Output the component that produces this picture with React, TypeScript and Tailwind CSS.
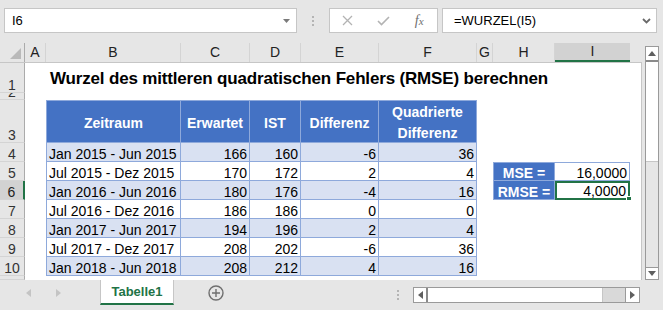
import type { ReactNode } from 'react';

const rows: [string, number, number, number, number][] = [
  ['Jan 2015 - Jun 2015', 166, 160, -6, 36],
  ['Jul 2015 - Dez 2015', 170, 172, 2, 4],
  ['Jan 2016 - Jun 2016', 180, 176, -4, 16],
  ['Jul 2016 - Dez 2016', 186, 186, 0, 0],
  ['Jan 2017 - Jun 2017', 194, 196, 2, 4],
  ['Jul 2017 - Dez 2017', 208, 202, -6, 36],
  ['Jan 2018 - Jun 2018', 208, 212, 4, 16],
];

const cols = [
  { k: 'A', w: 'w-[21px]' },
  { k: 'B', w: 'w-[135px]' },
  { k: 'C', w: 'w-[69px]' },
  { k: 'D', w: 'w-[51px]' },
  { k: 'E', w: 'w-[78px]' },
  { k: 'F', w: 'w-[98px]' },
  { k: 'G', w: 'w-[16px]' },
  { k: 'H', w: 'w-[62px]' },
];

const cell = 'flex items-end border-r border-b border-[#8ea9db] text-[14px] leading-[14px] text-black whitespace-nowrap';
const head = 'bg-[#4472c4] text-white font-bold border-t border-r border-b border-[#8ea9db] flex items-center justify-center text-center text-[14px] pt-[3px]';

function Row({ n, h, sel, children }: { n?: number; h: string; sel?: boolean; children?: ReactNode }) {
  return (
    <div className={`flex shrink-0 overflow-hidden ${h}`}>
      <div
        className={`w-[25px] shrink-0 flex items-end justify-center overflow-hidden border-b border-[#d4d4d4] text-[14px] leading-[14px] ${
          sel ? 'bg-[#d2d2d2] border-r-2 border-r-[#217346] text-[#222]' : 'border-r border-r-[#ababab] text-[#333]'
        }`}
      >
        {n}
      </div>
      <div className="flex-1 flex bg-white border-r border-[#c6c6c6]">{children}</div>
    </div>
  );
}

function TopBar() {
  return (
    <div className="h-[43px] shrink-0 flex items-start pt-[8px]">
      <div className="ml-[4px] w-[293px] h-[25px] bg-white border border-[#c6c6c6] flex items-center justify-between pl-[7px] pr-[6px]">
        <span className="text-[13px] text-black">I6</span>
        <svg width="7" height="4" viewBox="0 0 7 4">
          <path d="M0 0 L7 0 L3.5 4 Z" fill="#7a7a7a" />
        </svg>
      </div>
      <div className="ml-[15px] mt-[8px] flex flex-col gap-[2px]">
        <div className="w-[2px] h-[2px] bg-[#b4b4b4]" />
        <div className="w-[2px] h-[2px] bg-[#b4b4b4]" />
        <div className="w-[2px] h-[2px] bg-[#b4b4b4]" />
      </div>
      <div className="ml-[15px] w-[109px] h-[25px] bg-white border border-[#c6c6c6] flex items-center">
        <div className="w-[36px] flex justify-center">
          <svg width="11" height="11" viewBox="0 0 11 11">
            <path d="M1 1 L10 10 M10 1 L1 10" stroke="#b3b3b3" strokeWidth="1.3" />
          </svg>
        </div>
        <div className="w-[36px] flex justify-center">
          <svg width="13" height="10" viewBox="0 0 13 10">
            <path d="M1 5 L4.5 8.5 L12 1" stroke="#b3b3b3" strokeWidth="1.6" fill="none" />
          </svg>
        </div>
        <div className="w-[36px] flex justify-center font-['Liberation_Serif',serif] italic text-[14px] text-[#6f6f6f] leading-[14px]">
          f<span className="text-[11px]">x</span>
        </div>
      </div>
      <div className="ml-[4px] w-[215px] h-[25px] bg-white border border-[#c6c6c6] flex items-center justify-between pl-[11px] pr-[5px]">
        <span className="text-[13px] text-black">=WURZEL(I5)</span>
        <svg width="9" height="6" viewBox="0 0 9 6">
          <path d="M1 1 L4.5 4.5 L8 1" stroke="#6a6a6a" strokeWidth="1.8" fill="none" />
        </svg>
      </div>
    </div>
  );
}

function ColumnHeaders() {
  return (
    <div className="flex h-[20px] shrink-0 border-b border-[#c6c6c6]">
      <div className="w-[25px] shrink-0 border-r border-[#ababab]">
        <svg width="25" height="19" viewBox="0 0 25 19">
          <path d="M21 5 L21 16 L10 16 Z" fill="#b9b9b9" />
        </svg>
      </div>
      {cols.map((c) => (
        <div key={c.k} className={`${c.w} shrink-0 flex items-center justify-center border-r border-[#d4d4d4] text-[14px] text-[#222]`}>
          {c.k}
        </div>
      ))}
      <div className="w-[75px] shrink-0 flex items-center justify-center bg-[#d2d2d2] border-b-2 border-[#217346] text-[14px] text-[#222]">I</div>
      <div className="flex-1" />
    </div>
  );
}

function Sheet() {
  return (
    <div className="w-[642px] h-[237px] flex flex-col">
      <ColumnHeaders />
      <Row n={1} h="h-[30px]">
        <div className="w-[21px] shrink-0" />
        <div className="pl-[4px] pb-[4px] flex items-end whitespace-nowrap text-[17px] font-bold tracking-[-0.17px] leading-[20px] text-black">
          Wurzel des mittleren quadratischen Fehlers (RMSE) berechnen
        </div>
      </Row>
      <Row n={2} h="h-[7px]" />
      <Row n={3} h="h-[43px]">
        <div className="w-[21px] shrink-0" />
        <div className={`w-[135px] border-l ${head}`}>Zeitraum</div>
        <div className={`w-[69px] ${head}`}>Erwartet</div>
        <div className={`w-[51px] ${head}`}>IST</div>
        <div className={`w-[78px] ${head}`}>Differenz</div>
        <div className={`w-[98px] leading-[21px] ${head}`}>
          Quadrierte
          <br />
          Differenz
        </div>
      </Row>
      {rows.map((r, i) => {
        const n = i + 4;
        const bg = i % 2 === 0 ? 'bg-[#d9e1f2]' : 'bg-white';
        return (
          <Row key={n} n={n} h="h-[19px]" sel={n === 6}>
            <div className="w-[21px] shrink-0" />
            <div className={`w-[135px] shrink-0 border-l pl-[2px] ${bg} ${cell}`}>{r[0]}</div>
            <div className={`w-[69px] shrink-0 justify-end pr-[2px] ${bg} ${cell}`}>{r[1]}</div>
            <div className={`w-[51px] shrink-0 justify-end pr-[2px] ${bg} ${cell}`}>{r[2]}</div>
            <div className={`w-[78px] shrink-0 justify-end pr-[2px] ${bg} ${cell}`}>{r[3]}</div>
            <div className={`w-[98px] shrink-0 justify-end pr-[2px] ${bg} ${cell}`}>{r[4]}</div>
            <div className="w-[16px] shrink-0" />
            {n === 5 && (
              <>
                <div className={`w-[62px] shrink-0 border-l border-t justify-center bg-[#4472c4] text-white font-bold ${cell}`}>MSE =</div>
                <div className={`w-[75px] shrink-0 border-t justify-end pr-[2px] ${cell}`}>16,0000</div>
              </>
            )}
            {n === 6 && (
              <>
                <div className={`w-[62px] shrink-0 border-l justify-center bg-[#4472c4] text-white font-bold ${cell}`}>RMSE =</div>
                <div className="relative w-[75px] shrink-0 flex items-end justify-end pr-[2px] border-2 border-[#217346] text-[14px] leading-[13px] text-black">
                  4,0000
                  <div className="absolute -right-[4px] -bottom-[4px] w-[6px] h-[6px] bg-[#217346] border border-white z-10" />
                </div>
              </>
            )}
          </Row>
        );
      })}
      <Row h="flex-1 min-h-0" />
    </div>
  );
}

function VScroll() {
  return (
    <div className="ml-[3px] mt-[3px] w-[14px] h-[234px] flex flex-col border border-[#9a9a9a] bg-[#e6e6e6]">
      <div className="h-[15px] shrink-0 flex items-center justify-center bg-white border-b-2 border-[#8a8a8a]">
        <svg width="8" height="5" viewBox="0 0 8 5">
          <path d="M0 5 L8 5 L4 0 Z" fill="#5f5f5f" />
        </svg>
      </div>
      <div className="h-[100px] shrink-0 bg-white border-b border-[#c6c6c6]" />
      <div className="flex-1" />
      <div className="h-[12px] shrink-0 flex items-center justify-center bg-white border-t border-[#9a9a9a]">
        <svg width="8" height="5" viewBox="0 0 8 5">
          <path d="M0 0 L8 0 L4 5 Z" fill="#5f5f5f" />
        </svg>
      </div>
    </div>
  );
}

function BottomBar() {
  return (
    <div className="h-[30px] shrink-0 flex items-start">
      <div className="w-[100px] h-[25px] flex items-center pl-[26px] gap-[25px]">
        <svg width="5" height="8" viewBox="0 0 5 8">
          <path d="M5 0 L5 8 L0 4 Z" fill="#c4c4c4" />
        </svg>
        <svg width="5" height="8" viewBox="0 0 5 8">
          <path d="M0 0 L0 8 L5 4 Z" fill="#c4c4c4" />
        </svg>
      </div>
      <div className="w-[74px] h-[25px] bg-white border-x border-[#c6c6c6] border-b-2 border-b-[#217346] flex items-center justify-center text-[13px] font-bold text-[#217346]">
        Tabelle1
      </div>
      <div className="ml-[34px] mt-[5px]">
        <svg width="16" height="16" viewBox="0 0 16 16">
          <circle cx="8" cy="8" r="7" stroke="#6f6f6f" strokeWidth="1.4" fill="none" />
          <path d="M8 4 L8 12 M4 8 L12 8" stroke="#6f6f6f" strokeWidth="1.4" />
        </svg>
      </div>
      <div className="ml-[173px] mt-[10px] flex flex-col gap-[2px]">
        <div className="w-[2px] h-[2px] bg-[#b4b4b4]" />
        <div className="w-[2px] h-[2px] bg-[#b4b4b4]" />
        <div className="w-[2px] h-[2px] bg-[#b4b4b4]" />
      </div>
      <div className="ml-[14px] mt-[7px] w-[227px] h-[16px] flex border border-[#9a9a9a] bg-[#d9d9d9]">
        <div className="w-[14px] shrink-0 flex items-center justify-center bg-white border-r-2 border-[#8a8a8a]">
          <svg width="5" height="8" viewBox="0 0 5 8">
            <path d="M5 0 L5 8 L0 4 Z" fill="#5f5f5f" />
          </svg>
        </div>
        <div className="w-[175px] shrink-0 bg-white border-r border-[#c6c6c6]" />
        <div className="flex-1" />
        <div className="w-[14px] shrink-0 flex items-center justify-center bg-white border-l border-[#9a9a9a]">
          <svg width="5" height="8" viewBox="0 0 5 8">
            <path d="M0 0 L0 8 L5 4 Z" fill="#5f5f5f" />
          </svg>
        </div>
      </div>
    </div>
  );
}

export default function App() {
  return (
    <div className="w-[663px] h-[310px] bg-[#e6e6e6] flex flex-col overflow-hidden font-['Liberation_Sans',Arial,sans-serif]">
      <TopBar />
      <div className="flex h-[237px] shrink-0">
        <Sheet />
        <VScroll />
      </div>
      <BottomBar />
    </div>
  );
}
